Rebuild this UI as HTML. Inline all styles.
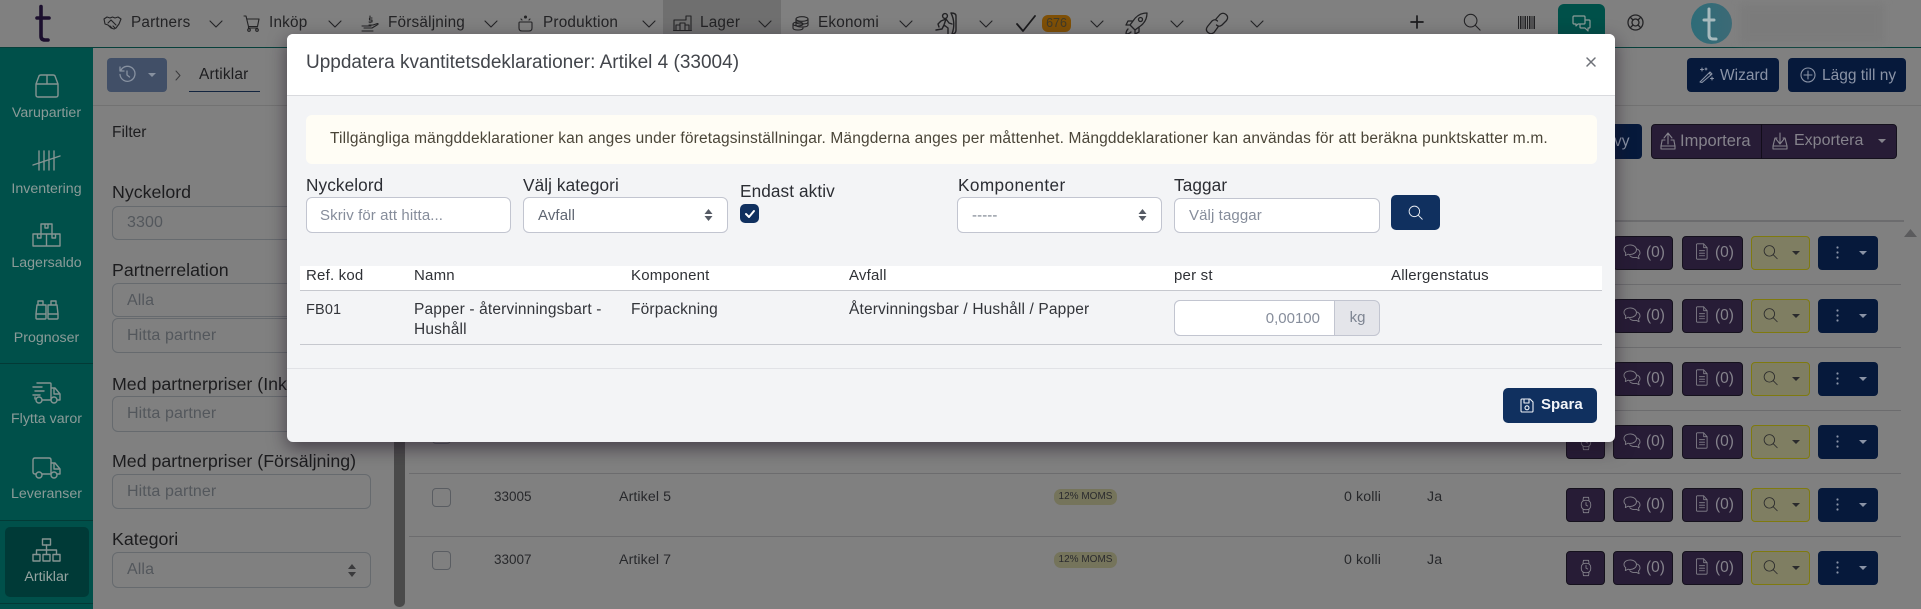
<!DOCTYPE html>
<html lang="sv"><head><meta charset="utf-8"><title>Artiklar</title>
<style>
*{box-sizing:border-box}
html,body{margin:0;padding:0;width:1921px;height:609px;overflow:hidden;background:#808080;font-family:"Liberation Sans",sans-serif;color:#1d1d1f}
.a{position:absolute}
.t{position:absolute;white-space:nowrap;line-height:20px;font-size:14px}
.nav{font-size:15.3px;color:#232325;letter-spacing:.2px}
svg{position:absolute;overflow:visible;fill:none;stroke-linecap:round;stroke-linejoin:round}
.ic{stroke:#232325;stroke-width:1.1}
.sd{stroke:#859492;stroke-width:1.4}
.sl{font-size:14.2px;color:#8b9b98;width:93px;left:0;text-align:center;margin-top:1px}
.fl{font-size:17.8px;color:#1c1c1e;left:112px}
.fi{position:absolute;left:112px;width:259px;border:1px solid #666a6e;border-radius:6px;background:#808080}
.ph{color:#53575c;font-size:16px;letter-spacing:.1px;margin-top:1px}
.bt{position:absolute;height:34px;border-radius:4px;border:1px solid #15111d;background:#271c36}
.bn{position:absolute;height:34px;border-radius:4px;background:#06193b}
.bc{color:#85838c;font-size:15.5px}
.rt{font-size:14.2px;letter-spacing:.1px;color:#27282b;margin-top:1px}
.mi{position:absolute;background:#fff;border:1px solid #c2c5d0;border-radius:6px}
.mp{color:#868d9b;font-size:15px;letter-spacing:.1px;margin-top:1px}
.th{font-size:15px;letter-spacing:.2px;color:#2f3136;margin-top:1px}
.td{font-size:15.5px;letter-spacing:.15px;color:#33353a}
.ml{font-size:17.2px;letter-spacing:.1px;color:#2b2d33}
</style></head><body>
<svg width="0" height="0" style="position:absolute"><defs>
<symbol id="chev" viewBox="0 0 14 8"><path d="M1 1l6 6 6-6"/></symbol>
<symbol id="search" viewBox="0 0 20 20"><circle cx="8.500" cy="8.500" r="7"/><path d="M13.600 13.600L19 19"/></symbol>
<symbol id="chat" viewBox="0 0 20 18"><path d="M8 1C4 1 1 3 1 6c0 1.500.7 2.800 2 3.800L2.500 13l3.200-1.600c.8.200 1.500.3 2.300.3 4 0 7-2.400 7-5.300S12 1 8 1z"/><path d="M15.300 5.500C17.600 6.400 19 8 19 10c0 1.300-.6 2.500-1.700 3.300l.7 3.200-3.200-1.500c-.7.200-1.400.3-2.100.3-2.200 0-4-.8-5.200-2.100"/></symbol>
<symbol id="doc" viewBox="0 0 14 20"><path d="M1.500 1h7.500l4 4.500V18a1 1 0 0 1-1 1h-10.500a1 1 0 0 1-1-1V2a1 1 0 0 1 1-1z"/><path d="M9 1v4.500h4M4 9h6M4 12h6M4 15h6"/></symbol>
<symbol id="watch" viewBox="0 0 14 20"><rect x="1.500" y="4.500" width="11" height="11" rx="4.500"/><path d="M3.500 4.500L4 1h6l.5 3.500M3.500 15.500L4 19h6l.5-3.500M7 7v3.200l2 1"/></symbol>
</defs></svg>

<!-- top bar -->
<div class="a" style="left:0;top:0;width:1921px;height:48px;background:#808080;border-bottom:1px solid #07403b"></div>
<div class="a" style="left:663px;top:0;width:118px;height:47px;background:#6f6f6f"></div>
<svg style="left:36px;top:5px" width="16" height="37" viewBox="0 0 16 37"><path d="M5 1.500V31q0 4 4 4h3M1 13h12" stroke="#1c0f2e" stroke-width="3.600"/></svg>

<svg class="ic" style="left:103px;top:15px" width="19" height="15" viewBox="0 0 19 15"><path d="M1 4l3-2 3 1 2.500-1 2.500 1 3-1 3 2-2 5-3 4-2 1-3-1-3-3-3-1zM5 8l3-3 5 5M7 11l2 2M10 11l2 2"/></svg>
<span class="t nav" style="left:131px;top:13px">Partners</span>
<svg class="ic" style="left:209px;top:20px" width="14" height="8"><use href="#chev"/></svg>
<svg class="ic" style="left:243px;top:15px" width="17" height="17" viewBox="0 0 17 17"><path d="M1 1h2l2.500 10.500h9L16 4H4M5.500 11.500v1.500h9"/><circle cx="6" cy="15" r="1.300"/><circle cx="14" cy="15" r="1.300"/></svg>
<span class="t nav" style="left:269px;top:13px">Inköp</span>
<svg class="ic" style="left:328px;top:20px" width="14" height="8"><use href="#chev"/></svg>
<svg class="ic" style="left:361px;top:15px" width="18" height="17" viewBox="0 0 18 17"><path d="M1 11h9M3 13h8l5-3q2-1 .5-1.500L12 10H8M1 16h11M9 1v.8M11 3H8.500v2H11v2H8M9 7v.8"/></svg>
<span class="t nav" style="left:388px;top:13px">Försäljning</span>
<svg class="ic" style="left:484px;top:20px" width="14" height="8"><use href="#chev"/></svg>
<svg class="ic" style="left:518px;top:15px" width="15" height="17" viewBox="0 0 15 17"><path d="M2 7h11q1 0 1 1v5q0 3-3 3H4q-3 0-3-3V8q0-1 1-1z"/><circle cx="7.500" cy="2" r="1" fill="#232325"/><path d="M3 4l1 1M12 4l-1 1"/></svg>
<span class="t nav" style="left:543px;top:13px">Produktion</span>
<svg class="ic" style="left:642px;top:20px" width="14" height="8"><use href="#chev"/></svg>
<svg class="ic" style="left:673px;top:15px" width="19" height="16" viewBox="0 0 19 16"><path d="M.5 15.500h18M1 15.500V5M18 15.500V1h-5v4H1M3 15V10h4v5M7 15V8h5v7M12 15V10h4v5"/></svg>
<span class="t nav" style="left:700px;top:13px">Lager</span>
<svg class="ic" style="left:758px;top:20px" width="14" height="8"><use href="#chev"/></svg>
<svg class="ic" style="left:792px;top:16px" width="17" height="15" viewBox="0 0 17 15"><ellipse cx="10" cy="3" rx="6" ry="2.300"/><path d="M4 3v6q0 2 6 2t6-2V3M4 6q0 2 6 2t6-2"/><ellipse cx="6" cy="8" rx="5" ry="2"/><path d="M1 8v4q0 2 5 2t5-2"/></svg>
<span class="t nav" style="left:818px;top:13px">Ekonomi</span>
<svg class="ic" style="left:899px;top:20px" width="14" height="8"><use href="#chev"/></svg>
<svg class="ic" style="left:935px;top:12px;stroke-width:1.400" width="23" height="23" viewBox="0 0 23 23"><circle cx="10" cy="4" r="2.400"/><path d="M6 9l5-2 3 4 3 1M11 7l-2 6 4 3v6M9 13l-2 4-6 1M6 9l-3 3 1 3M16 1q5 10 1 21q4 0 4-4V4q0-3-5-3z"/></svg>
<svg class="ic" style="left:979px;top:20px" width="14" height="8"><use href="#chev"/></svg>
<svg class="ic" style="left:1016px;top:15px;stroke-width:1.800;stroke:#1b1b1d" width="20" height="17" viewBox="0 0 20 17"><path d="M1 9l6 7L19 1"/></svg>
<div class="a" style="left:1042px;top:15px;width:29px;height:17px;border-radius:6px;background:#7f5006"></div>
<span class="t" style="left:1042px;top:13px;width:29px;text-align:center;font-size:12.500px;color:#3f3a2a">676</span>
<svg class="ic" style="left:1090px;top:20px" width="14" height="8"><use href="#chev"/></svg>
<svg class="ic" style="left:1125px;top:12px;stroke-width:1.300" width="23" height="23" viewBox="0 0 23 23"><path d="M22 1q-9 0-14 8l-3 4 5 5 4-3q8-5 8-14zM8 9H3L1 13l4 0M14 15v5l-4 2v-4"/><circle cx="15.500" cy="7.500" r="2"/><path d="M3 17q-2 2-2 5 3 0 5-2"/></svg>
<svg class="ic" style="left:1170px;top:20px" width="14" height="8"><use href="#chev"/></svg>
<svg class="ic" style="left:1205px;top:12px;stroke-width:1.300" width="24" height="23" viewBox="0 0 24 23"><path d="M11 7l4-4.500q3-2.500 6 0t.5 6L17 13q-3 2.500-5.500 0M13 15l-4 5.500q-3 2.500-6 0t-.5-6L7 9q3-2.500 5.500 0"/></svg>
<svg class="ic" style="left:1250px;top:20px" width="14" height="8"><use href="#chev"/></svg>

<svg style="left:1410px;top:15px;stroke:#1b1b1d;stroke-width:1.700" width="14" height="14" viewBox="0 0 14 14"><path d="M7 1v12M1 7h12"/></svg>
<svg class="ic" style="left:1463px;top:13px;stroke-width:1.200" width="18" height="18"><use href="#search"/></svg>
<svg style="left:1518px;top:16px;stroke:#232325;stroke-linecap:butt" width="17" height="13" viewBox="0 0 17 13"><path d="M.5 0v13M2.500 0v13M4 0v13M6 0v13M7.500 0v13M9.500 0v13M11.500 0v13M13 0v13M15 0v13M16.500 0v13"/></svg>
<div class="a" style="left:1558px;top:4px;width:47px;height:44px;border-radius:6px;background:#005049"></div>
<svg style="left:1572px;top:15px;stroke:#8d9c99;stroke-width:1.200" width="19" height="17" viewBox="0 0 19 17"><path d="M2 1h10q1 0 1 1v6q0 1-1 1H6l-2 2V9H2q-1 0-1-1V2q0-1 1-1z"/><path d="M14 5h3q1 0 1 1v6q0 1-1 1h-1v3l-3-3H9q-1 0-1-1v-2"/></svg>
<svg class="ic" style="left:1627px;top:14px;stroke-width:1.300" width="17" height="17" viewBox="0 0 17 17"><circle cx="8.500" cy="8.500" r="7.500"/><circle cx="8.500" cy="8.500" r="3.500"/><path d="M3.200 3.200l2.800 2.800M13.800 3.200L11 6M3.200 13.800L6 11M13.800 13.800L11 11"/></svg>
<div class="a" style="left:1691px;top:3px;width:41px;height:41px;border-radius:50%;background:linear-gradient(90deg,#2e6c78,#3c6a76)"></div>
<svg style="left:1703px;top:8px;stroke:#a7babd;stroke-width:3" width="16" height="34" viewBox="0 0 16 34"><path d="M6 1v26q0 4 4 4h3M1 12h10"/></svg>
<div class="a" style="left:1740px;top:4px;width:144px;height:39px;background:#7b7b7b;filter:blur(4px)"></div>

<!-- sidebar -->
<div class="a" style="left:0;top:48px;width:93px;height:561px;background:#00504a"></div>
<div class="a" style="left:0;top:363px;width:93px;height:1px;background:#033a36"></div>
<div class="a" style="left:0;top:520px;width:93px;height:1px;background:#033a36"></div>
<div class="a" style="left:0;top:603px;width:93px;height:1px;background:#033a36"></div>
<div class="a" style="left:5px;top:527px;width:84px;height:70px;border-radius:5px;background:#003a37"></div>

<svg class="sd" style="left:35px;top:74px" width="24" height="24" viewBox="0 0 24 24"><path d="M1 10V21q0 2 2 2h18q2 0 2-2V10l-3-8q-.5-1-2-1H6Q4.500 1 4 2zM1 10h22M12 1v9"/></svg>
<span class="t sl" style="top:102px">Varupartier</span>
<svg class="sd" style="left:32px;top:150px" width="29" height="21" viewBox="0 0 29 21"><path d="M7 1v19M12 1v19M17 1v19M22 1v19M1 15L28 6"/></svg>
<span class="t sl" style="top:178px">Inventering</span>
<svg class="sd" style="left:32px;top:223px" width="29" height="24" viewBox="0 0 29 24"><path d="M9 1h11v10H9zM1 11h13.500v12H1zM14.500 11H28v12H14.500zM13 1v4h3V1M5.500 11v4h3.500v-4M20 11v4h3.500v-4"/></svg>
<span class="t sl" style="top:252px">Lagersaldo</span>
<svg class="sd" style="left:35px;top:300px" width="24" height="20" viewBox="0 0 24 20"><path d="M3 1h5v4H3zM16 1h5v4h-5zM2 5L1 14v4q0 1 1 1h8q1 0 1-1V5H2zM22 5l1 9v4q0 1-1 1h-8q-1 0-1-1V5zM1 14h10M13 14h10"/></svg>
<span class="t sl" style="top:327px">Prognoser</span>
<svg class="sd" style="left:32px;top:382px" width="29" height="22" viewBox="0 0 29 22"><path d="M5 1h13q1 0 1 1v15M1 5h9M3 9h9M1 13h7M3 17v-2M10 18h9M19 6h4l5 6v6h-3"/><circle cx="7" cy="18" r="3"/><circle cx="22" cy="18" r="3"/><path d="M22 7v5h5"/></svg>
<span class="t sl" style="top:408px">Flytta varor</span>
<svg class="sd" style="left:32px;top:457px" width="29" height="22" viewBox="0 0 29 22"><path d="M4 17H3q-2 0-2-2V3q0-2 2-2h14q2 0 2 2v14H10M19 6h4l5 6v5h-3M19 17h0"/><circle cx="7" cy="18" r="3"/><circle cx="22" cy="18" r="3"/><path d="M22 7v5h5"/></svg>
<span class="t sl" style="top:483px">Leveranser</span>
<svg class="sd" style="left:32px;top:538px" width="29" height="24" viewBox="0 0 29 24"><rect x="10.500" y="1" width="8" height="6"/><rect x="1" y="16.500" width="7" height="6.500"/><rect x="11" y="16.500" width="7" height="6.500"/><rect x="21" y="16.500" width="7" height="6.500"/><path d="M14.500 7v9.500M4.500 16.500V12h20v4.500"/></svg>
<span class="t sl" style="top:566px;color:#97a5a2">Artiklar</span>

<!-- page header -->
<div class="a" style="left:93px;top:105px;width:1828px;height:1px;background:#727272"></div>
<div class="a" style="left:107px;top:58px;width:60px;height:34px;border-radius:4px;background:#414f67"></div>
<svg style="left:119px;top:66px;stroke:#8791a0;stroke-width:1.300" width="16" height="17" viewBox="0 0 16 17"><path d="M2 4a7.500 7.500 0 1 1-1 4.500M1 1v4h4M8 5v4l2.500 2"/></svg>
<div class="a" style="left:148px;top:73px;border:4px solid transparent;border-top:4px solid #8791a0;border-bottom:0"></div>
<svg style="left:175px;top:70px;stroke:#3a3a3c;stroke-width:1" width="6" height="11" viewBox="0 0 6 11"><path d="M1 1l4 4.500L1 10"/></svg>
<span class="t" style="left:199px;top:65px;font-size:15.500px;letter-spacing:.15px">Artiklar</span>
<div class="a" style="left:189px;top:91px;width:71px;height:1px;background:#12243f"></div>

<div class="bn" style="left:1687px;top:58px;width:92px"></div>
<svg style="left:1699px;top:67px;stroke:#8a93a6;stroke-width:1.100" width="16" height="16" viewBox="0 0 16 16"><path d="M1 15L11 5l2 2L3 15.500zM10 6l2 2M3 1v3M1.500 2.500h3M13 10v3M11.500 11.500h3M7 1v2M6 2h2"/></svg>
<span class="t" style="left:1720px;top:66px;font-size:15.500px;color:#8a93a6">Wizard</span>
<div class="bn" style="left:1788px;top:58px;width:118px"></div>
<svg style="left:1800px;top:67px;stroke:#8a93a6;stroke-width:1.100" width="16" height="16" viewBox="0 0 16 16"><circle cx="8" cy="8" r="7"/><path d="M8 4v8M4 8h8"/></svg>
<span class="t" style="left:1822px;top:66px;font-size:15.500px;color:#8a93a6">Lägg till ny</span>

<div class="bn" style="left:1600px;top:124px;width:42px;height:35px"></div>
<span class="t" style="left:1614px;top:132px;font-size:15.500px;color:#8a93a6">vy</span>
<div class="bt" style="left:1651px;top:124px;width:246px;height:35px"></div>
<div class="a" style="left:1761px;top:124px;width:1px;height:35px;background:#120d1a"></div>
<svg style="left:1660px;top:132px;stroke:#85838c;stroke-width:1.100" width="16" height="18" viewBox="0 0 16 18"><path d="M8 12V2M4 6l4-5 4 5M5 8H2v1L1 14v3h14v-3l-1-5V8h-3M1 14h14"/></svg>
<span class="t bc" style="left:1680px;top:131px;font-size:16.500px">Importera</span>
<svg style="left:1772px;top:132px;stroke:#85838c;stroke-width:1.100" width="16" height="18" viewBox="0 0 16 18"><path d="M8 1v10M4 7l4 5 4-5M5 6H3L1 14v3h14v-3l-2-8h-2M1 14h14"/></svg>
<span class="t bc" style="left:1794px;top:131px;font-size:16px">Exportera</span>
<div class="a" style="left:1878px;top:139px;border:4px solid transparent;border-top:4.500px solid #85838c;border-bottom:0"></div>

<!-- filter -->
<span class="t" style="left:112px;top:123px;font-size:15.500px">Filter</span>
<span class="t fl" style="top:182px">Nyckelord</span>
<div class="fi" style="top:206px;height:34px"></div><span class="t ph" style="left:127px;top:212px">3300</span>
<span class="t fl" style="top:260px">Partnerrelation</span>
<div class="fi" style="top:283px;height:34px"></div><span class="t ph" style="left:127px;top:290px">Alla</span>
<div class="fi" style="top:318px;height:35px"></div><span class="t ph" style="left:127px;top:325px">Hitta partner</span>
<span class="t fl" style="top:374px">Med partnerpriser (Inköp)</span>
<div class="fi" style="top:396px;height:36px"></div><span class="t ph" style="left:127px;top:403px">Hitta partner</span>
<span class="t fl" style="top:451px">Med partnerpriser (Försäljning)</span>
<div class="fi" style="top:474px;height:35px"></div><span class="t ph" style="left:127px;top:481px">Hitta partner</span>
<span class="t fl" style="top:529px">Kategori</span>
<div class="fi" style="top:552px;height:36px"></div><span class="t ph" style="left:127px;top:559px">Alla</span>
<svg style="left:347px;top:564px" width="10" height="13" viewBox="0 0 10 13"><path d="M5 0l4 5H1zM5 13l4-5H1z" fill="#3a3a3c"/></svg>
<div class="a" style="left:394px;top:300px;width:11px;height:307px;border-radius:5px;background:#4a4a4a"></div>

<!-- table -->
<div class="a" style="left:409px;top:220px;width:1495px;height:2px;background:#6c6c6e"></div>
<div class="a" style="left:409px;top:284px;width:1492px;height:1px;background:#6c6c6e"></div>
<div class="a" style="left:409px;top:347px;width:1492px;height:1px;background:#6c6c6e"></div>
<div class="a" style="left:409px;top:410px;width:1492px;height:1px;background:#6c6c6e"></div>
<div class="a" style="left:409px;top:473px;width:1492px;height:1px;background:#6c6c6e"></div>
<div class="a" style="left:409px;top:536px;width:1492px;height:1px;background:#6c6c6e"></div>
<svg style="left:1904px;top:229px" width="13" height="8" viewBox="0 0 13 8"><path d="M6.500 0L13 8H0z" fill="#5b5b5d"/></svg>

<div class="a" style="left:432px;top:425px;width:19px;height:19px;border:1px solid #5a5d62;border-radius:4px"></div>
<div class="a" style="left:432px;top:488px;width:19px;height:19px;border:1px solid #5a5d62;border-radius:4px"></div>
<div class="a" style="left:432px;top:551px;width:19px;height:19px;border:1px solid #5a5d62;border-radius:4px"></div>
<span class="t rt" style="left:494px;top:486px;font-size:13.500px;letter-spacing:0">33005</span>
<span class="t rt" style="left:619px;top:486px">Artikel 5</span>
<span class="t rt" style="left:494px;top:549px;font-size:13.500px;letter-spacing:0">33007</span>
<span class="t rt" style="left:619px;top:549px">Artikel 7</span>
<div class="a" style="left:1054px;top:489px;width:63px;height:16px;border-radius:7px;background:#75745b"></div>
<span class="t" style="left:1054px;top:487px;width:63px;text-align:center;font-size:10px;color:#2a2a2e">12% MOMS</span>
<div class="a" style="left:1054px;top:552px;width:63px;height:16px;border-radius:7px;background:#75745b"></div>
<span class="t" style="left:1054px;top:550px;width:63px;text-align:center;font-size:10px;color:#2a2a2e">12% MOMS</span>
<span class="t rt" style="left:1344px;top:486px">0 kolli</span>
<span class="t rt" style="left:1427px;top:486px">Ja</span>
<span class="t rt" style="left:1344px;top:549px">0 kolli</span>
<span class="t rt" style="left:1427px;top:549px">Ja</span>

<!-- row buttons -->
<div class="a" style="left:0;top:236px"><div class="bt" style="left:1613px;top:0;width:60px"></div><svg style="left:1623px;top:8px;stroke:#85838c;stroke-width:1" width="18" height="16"><use href="#chat"/></svg><span class="t bc" style="left:1646px;top:7px">(0)</span><div class="bt" style="left:1682px;top:0;width:61px"></div><svg style="left:1696px;top:7px;stroke:#85838c;stroke-width:1" width="12" height="17"><use href="#doc"/></svg><span class="t bc" style="left:1715px;top:7px">(0)</span><div class="a" style="left:1751px;top:0;width:59px;height:34px;border:1px solid #7f7a0f;border-radius:4px;background:#7f7e62"></div><svg style="left:1763px;top:8px;stroke:#2b2b2d;stroke-width:1.100" width="15" height="16"><use href="#search"/></svg><div class="a" style="left:1792px;top:15px;border:4px solid transparent;border-top:4.500px solid #2b2b2d;border-bottom:0"></div><div class="bn" style="left:1818px;top:0;width:60px"></div><svg style="left:1836px;top:10px" width="3" height="13" viewBox="0 0 3 13"><circle cx="1.500" cy="1.500" r="1.100" fill="#8a93a6"/><circle cx="1.500" cy="6.500" r="1.100" fill="#8a93a6"/><circle cx="1.500" cy="11.500" r="1.100" fill="#8a93a6"/></svg><div class="a" style="left:1859px;top:15px;border:4px solid transparent;border-top:4.500px solid #8a93a6;border-bottom:0"></div></div>
<div class="a" style="left:0;top:299px"><div class="bt" style="left:1613px;top:0;width:60px"></div><svg style="left:1623px;top:8px;stroke:#85838c;stroke-width:1" width="18" height="16"><use href="#chat"/></svg><span class="t bc" style="left:1646px;top:7px">(0)</span><div class="bt" style="left:1682px;top:0;width:61px"></div><svg style="left:1696px;top:7px;stroke:#85838c;stroke-width:1" width="12" height="17"><use href="#doc"/></svg><span class="t bc" style="left:1715px;top:7px">(0)</span><div class="a" style="left:1751px;top:0;width:59px;height:34px;border:1px solid #7f7a0f;border-radius:4px;background:#7f7e62"></div><svg style="left:1763px;top:8px;stroke:#2b2b2d;stroke-width:1.100" width="15" height="16"><use href="#search"/></svg><div class="a" style="left:1792px;top:15px;border:4px solid transparent;border-top:4.500px solid #2b2b2d;border-bottom:0"></div><div class="bn" style="left:1818px;top:0;width:60px"></div><svg style="left:1836px;top:10px" width="3" height="13" viewBox="0 0 3 13"><circle cx="1.500" cy="1.500" r="1.100" fill="#8a93a6"/><circle cx="1.500" cy="6.500" r="1.100" fill="#8a93a6"/><circle cx="1.500" cy="11.500" r="1.100" fill="#8a93a6"/></svg><div class="a" style="left:1859px;top:15px;border:4px solid transparent;border-top:4.500px solid #8a93a6;border-bottom:0"></div></div>
<div class="a" style="left:0;top:362px"><div class="bt" style="left:1613px;top:0;width:60px"></div><svg style="left:1623px;top:8px;stroke:#85838c;stroke-width:1" width="18" height="16"><use href="#chat"/></svg><span class="t bc" style="left:1646px;top:7px">(0)</span><div class="bt" style="left:1682px;top:0;width:61px"></div><svg style="left:1696px;top:7px;stroke:#85838c;stroke-width:1" width="12" height="17"><use href="#doc"/></svg><span class="t bc" style="left:1715px;top:7px">(0)</span><div class="a" style="left:1751px;top:0;width:59px;height:34px;border:1px solid #7f7a0f;border-radius:4px;background:#7f7e62"></div><svg style="left:1763px;top:8px;stroke:#2b2b2d;stroke-width:1.100" width="15" height="16"><use href="#search"/></svg><div class="a" style="left:1792px;top:15px;border:4px solid transparent;border-top:4.500px solid #2b2b2d;border-bottom:0"></div><div class="bn" style="left:1818px;top:0;width:60px"></div><svg style="left:1836px;top:10px" width="3" height="13" viewBox="0 0 3 13"><circle cx="1.500" cy="1.500" r="1.100" fill="#8a93a6"/><circle cx="1.500" cy="6.500" r="1.100" fill="#8a93a6"/><circle cx="1.500" cy="11.500" r="1.100" fill="#8a93a6"/></svg><div class="a" style="left:1859px;top:15px;border:4px solid transparent;border-top:4.500px solid #8a93a6;border-bottom:0"></div></div>
<div class="a" style="left:0;top:425px"><div class="bt" style="left:1566px;top:0;width:39px"></div><svg style="left:1580px;top:8px;stroke:#85838c;stroke-width:1" width="12" height="18"><use href="#watch"/></svg><div class="bt" style="left:1613px;top:0;width:60px"></div><svg style="left:1623px;top:8px;stroke:#85838c;stroke-width:1" width="18" height="16"><use href="#chat"/></svg><span class="t bc" style="left:1646px;top:7px">(0)</span><div class="bt" style="left:1682px;top:0;width:61px"></div><svg style="left:1696px;top:7px;stroke:#85838c;stroke-width:1" width="12" height="17"><use href="#doc"/></svg><span class="t bc" style="left:1715px;top:7px">(0)</span><div class="a" style="left:1751px;top:0;width:59px;height:34px;border:1px solid #7f7a0f;border-radius:4px;background:#7f7e62"></div><svg style="left:1763px;top:8px;stroke:#2b2b2d;stroke-width:1.100" width="15" height="16"><use href="#search"/></svg><div class="a" style="left:1792px;top:15px;border:4px solid transparent;border-top:4.500px solid #2b2b2d;border-bottom:0"></div><div class="bn" style="left:1818px;top:0;width:60px"></div><svg style="left:1836px;top:10px" width="3" height="13" viewBox="0 0 3 13"><circle cx="1.500" cy="1.500" r="1.100" fill="#8a93a6"/><circle cx="1.500" cy="6.500" r="1.100" fill="#8a93a6"/><circle cx="1.500" cy="11.500" r="1.100" fill="#8a93a6"/></svg><div class="a" style="left:1859px;top:15px;border:4px solid transparent;border-top:4.500px solid #8a93a6;border-bottom:0"></div></div>
<div class="a" style="left:0;top:488px"><div class="bt" style="left:1566px;top:0;width:39px"></div><svg style="left:1580px;top:8px;stroke:#85838c;stroke-width:1" width="12" height="18"><use href="#watch"/></svg><div class="bt" style="left:1613px;top:0;width:60px"></div><svg style="left:1623px;top:8px;stroke:#85838c;stroke-width:1" width="18" height="16"><use href="#chat"/></svg><span class="t bc" style="left:1646px;top:7px">(0)</span><div class="bt" style="left:1682px;top:0;width:61px"></div><svg style="left:1696px;top:7px;stroke:#85838c;stroke-width:1" width="12" height="17"><use href="#doc"/></svg><span class="t bc" style="left:1715px;top:7px">(0)</span><div class="a" style="left:1751px;top:0;width:59px;height:34px;border:1px solid #7f7a0f;border-radius:4px;background:#7f7e62"></div><svg style="left:1763px;top:8px;stroke:#2b2b2d;stroke-width:1.100" width="15" height="16"><use href="#search"/></svg><div class="a" style="left:1792px;top:15px;border:4px solid transparent;border-top:4.500px solid #2b2b2d;border-bottom:0"></div><div class="bn" style="left:1818px;top:0;width:60px"></div><svg style="left:1836px;top:10px" width="3" height="13" viewBox="0 0 3 13"><circle cx="1.500" cy="1.500" r="1.100" fill="#8a93a6"/><circle cx="1.500" cy="6.500" r="1.100" fill="#8a93a6"/><circle cx="1.500" cy="11.500" r="1.100" fill="#8a93a6"/></svg><div class="a" style="left:1859px;top:15px;border:4px solid transparent;border-top:4.500px solid #8a93a6;border-bottom:0"></div></div>
<div class="a" style="left:0;top:551px"><div class="bt" style="left:1566px;top:0;width:39px"></div><svg style="left:1580px;top:8px;stroke:#85838c;stroke-width:1" width="12" height="18"><use href="#watch"/></svg><div class="bt" style="left:1613px;top:0;width:60px"></div><svg style="left:1623px;top:8px;stroke:#85838c;stroke-width:1" width="18" height="16"><use href="#chat"/></svg><span class="t bc" style="left:1646px;top:7px">(0)</span><div class="bt" style="left:1682px;top:0;width:61px"></div><svg style="left:1696px;top:7px;stroke:#85838c;stroke-width:1" width="12" height="17"><use href="#doc"/></svg><span class="t bc" style="left:1715px;top:7px">(0)</span><div class="a" style="left:1751px;top:0;width:59px;height:34px;border:1px solid #7f7a0f;border-radius:4px;background:#7f7e62"></div><svg style="left:1763px;top:8px;stroke:#2b2b2d;stroke-width:1.100" width="15" height="16"><use href="#search"/></svg><div class="a" style="left:1792px;top:15px;border:4px solid transparent;border-top:4.500px solid #2b2b2d;border-bottom:0"></div><div class="bn" style="left:1818px;top:0;width:60px"></div><svg style="left:1836px;top:10px" width="3" height="13" viewBox="0 0 3 13"><circle cx="1.500" cy="1.500" r="1.100" fill="#8a93a6"/><circle cx="1.500" cy="6.500" r="1.100" fill="#8a93a6"/><circle cx="1.500" cy="11.500" r="1.100" fill="#8a93a6"/></svg><div class="a" style="left:1859px;top:15px;border:4px solid transparent;border-top:4.500px solid #8a93a6;border-bottom:0"></div></div>

<!-- modal -->
<div class="a" style="left:287px;top:34px;width:1328px;height:408px;border-radius:6px;background:#f3f4f6;box-shadow:0 6px 18px rgba(30,20,35,.6)"></div>
<div class="a" style="left:287px;top:34px;width:1328px;height:62px;border-radius:6px 6px 0 0;background:#fff;border-bottom:1px solid #d9dade"></div>
<span class="t" style="left:306px;top:53px;font-size:19px;color:#42454b">Uppdatera kvantitetsdeklarationer: Artikel 4 (33004)</span>
<svg style="left:1586px;top:57px;stroke:#6e7178;stroke-width:1.500" width="10" height="10" viewBox="0 0 10 10"><path d="M1 1l8 8M9 1l-8 8"/></svg>

<div class="a" style="left:306px;top:115px;width:1291px;height:49px;border-radius:6px;background:#fffdf5"></div>
<span class="t" style="left:330px;top:129px;font-size:15.500px;letter-spacing:.15px;color:#4a4538">Tillgängliga mängddeklarationer kan anges under företagsinställningar. Mängderna anges per måttenhet. Mängddeklarationer kan användas för att beräkna punktskatter m.m.</span>

<span class="t ml" style="left:306px;top:175px">Nyckelord</span>
<div class="mi" style="left:306px;top:197px;width:205px;height:36px"></div>
<span class="t mp" style="left:320px;top:205px">Skriv för att hitta...</span>
<span class="t ml" style="left:523px;top:175px">Välj kategori</span>
<div class="mi" style="left:523px;top:197px;width:205px;height:36px"></div>
<span class="t mp" style="left:538px;top:205px;color:#5f6672">Avfall</span>
<svg style="left:704px;top:209px" width="9" height="12" viewBox="0 0 9 12"><path d="M4.500 0l4 5H.5zM4.500 12l4-5H.5z" fill="#565b65"/></svg>
<span class="t ml" style="left:740px;top:181px">Endast aktiv</span>
<div class="a" style="left:740px;top:204px;width:19px;height:19px;border-radius:5px;background:#10305f"></div>
<svg style="left:745px;top:210px;stroke:#fff;stroke-width:2" width="10" height="8" viewBox="0 0 10 8"><path d="M1 4l3 3 5-6"/></svg>
<span class="t ml" style="left:958px;top:175px;letter-spacing:.4px">Komponenter</span>
<div class="mi" style="left:957px;top:197px;width:205px;height:36px"></div>
<span class="t mp" style="left:972px;top:205px;color:#7d8591">-----</span>
<svg style="left:1138px;top:209px" width="9" height="12" viewBox="0 0 9 12"><path d="M4.500 0l4 5H.5zM4.500 12l4-5H.5z" fill="#565b65"/></svg>
<span class="t ml" style="left:1174px;top:175px">Taggar</span>
<div class="mi" style="left:1174px;top:198px;width:206px;height:35px"></div>
<span class="t mp" style="left:1189px;top:205px">Välj taggar</span>
<div class="a" style="left:1391px;top:195px;width:49px;height:35px;border-radius:5px;background:#10305f"></div>
<svg style="left:1408px;top:205px;stroke:#e8ecf2;stroke-width:1.200" width="15" height="15"><use href="#search"/></svg>

<div class="a" style="left:300px;top:266px;width:1302px;height:25px;background:#fff;border-bottom:1px solid #c6c8ce"></div>
<span class="t th" style="left:306px;top:265px">Ref. kod</span>
<span class="t th" style="left:414px;top:265px">Namn</span>
<span class="t th" style="left:631px;top:265px">Komponent</span>
<span class="t th" style="left:849px;top:265px">Avfall</span>
<span class="t th" style="left:1174px;top:265px">per st</span>
<span class="t th" style="left:1391px;top:265px">Allergenstatus</span>
<span class="t td" style="left:306px;top:300px;font-size:14.500px">FB01</span>
<span class="t td" style="left:414px;top:300px">Papper - återvinningsbart -</span>
<span class="t td" style="left:414px;top:320px">Hushåll</span>
<span class="t td" style="left:631px;top:300px">Förpackning</span>
<span class="t td" style="left:849px;top:300px">Återvinningsbar / Hushåll / Papper</span>
<div class="a" style="left:1174px;top:300px;width:206px;height:36px;background:#e4e5ea;border:1px solid #c2c5d0;border-radius:6px"></div>
<div class="a" style="left:1174px;top:300px;width:161px;height:36px;background:#fff;border:1px solid #c2c5d0;border-radius:6px 0 0 6px"></div>
<span class="t" style="left:1174px;top:309px;width:146px;text-align:right;font-size:15px;color:#868d9b">0,00100</span>
<span class="t" style="left:1335px;top:308px;width:45px;text-align:center;font-size:15px;color:#7d8491">kg</span>
<div class="a" style="left:300px;top:344px;width:1302px;height:1px;background:#c6c8ce"></div>
<div class="a" style="left:287px;top:368px;width:1328px;height:1px;background:#e1e2e6"></div>
<div class="a" style="left:1503px;top:388px;width:94px;height:35px;border-radius:5px;background:#10305f"></div>
<svg style="left:1520px;top:398px;stroke:#eef1f6;stroke-width:1.100" width="14" height="15" viewBox="0 0 14 15"><path d="M2 1h8l3 3v9a1 1 0 0 1-1 1H2a1 1 0 0 1-1-1V2a1 1 0 0 1 1-1zM4 1v4h5V1"/><circle cx="7" cy="9.800" r="2"/></svg>
<span class="t" style="left:1541px;top:395px;font-size:15px;font-weight:700;color:#f2f4f8">Spara</span>
</body></html>
